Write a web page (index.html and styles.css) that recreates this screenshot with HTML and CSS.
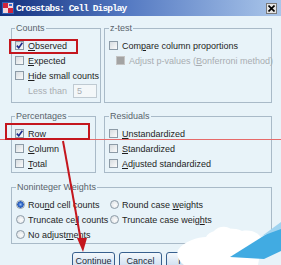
FILE: index.html
```html
<!DOCTYPE html>
<html lang="en">
<head>
    <meta charset="UTF-8">
    <title>Crosstabs: Cell Display</title>
    <link rel="stylesheet" href="styles.css">
</head>
<body>
<div class="window">
    <div class="titlebar">
        <svg class="app-icon" width="12" height="12" viewBox="0 0 12 12">
            <rect x="0" y="0" width="12" height="12" fill="#2c5fb4"/>
            <rect x="1" y="1" width="10" height="10" fill="#f2d6dc"/>
            <rect x="1" y="1" width="5" height="5" fill="#d0243c"/>
            <rect x="6" y="6" width="5" height="5" fill="#d0243c"/>
            <rect x="7" y="2" width="3" height="2" fill="#3a6ed0"/>
        </svg>
        <span class="title">Crosstabs: Cell Display</span>
        <span class="close">
            <svg width="7" height="7" viewBox="0 0 7 7"><path d="M0.5 0.5 L6.5 6.5 M6.5 0.5 L0.5 6.5" stroke="#000" stroke-width="1.6"/></svg>
        </span>
    </div>

    <div class="content">
        <div class="group-row top">
            <fieldset class="group counts">
                <legend>Counts</legend>
                <div class="opt"><span class="box checked"><svg width="7" height="7" viewBox="0 0 7 7"><path d="M0.8 3.6 L2.8 5.8 L6.4 0.8" fill="none" stroke="#1b2a8a" stroke-width="1.6"/></svg></span><span><u>O</u>bserved</span></div>
                <div class="opt"><span class="box"></span><span><u>E</u>xpected</span></div>
                <div class="opt"><span class="box"></span><span><u>H</u>ide small counts</span></div>
                <div class="opt sub muted">Less than <span class="num">5</span></div>
            </fieldset>
            <fieldset class="group wide">
                <legend>z-test</legend>
                <div class="opt"><span class="box"></span><span>Com<u>p</u>are column proportions</span></div>
                <div class="opt indent muted"><span class="box off"></span><span>Adjust p-values (<u>B</u>onferroni method)</span></div>
            </fieldset>
        </div>

        <div class="group-row mid">
            <fieldset class="group pct">
                <legend>Percentages</legend>
                <div class="opt"><span class="box checked"><svg width="7" height="7" viewBox="0 0 7 7"><path d="M0.8 3.6 L2.8 5.8 L6.4 0.8" fill="none" stroke="#1b2a8a" stroke-width="1.6"/></svg></span><span><u>R</u>ow</span></div>
                <div class="opt"><span class="box"></span><span><u>C</u>olumn</span></div>
                <div class="opt"><span class="box"></span><span><u>T</u>otal</span></div>
            </fieldset>
            <fieldset class="group wide">
                <legend>Residuals</legend>
                <div class="opt"><span class="box"></span><span><u>U</u>nstandardized</span></div>
                <div class="opt"><span class="box"></span><span><u>S</u>tandardized</span></div>
                <div class="opt"><span class="box"></span><span><u>A</u>djusted standardized</span></div>
            </fieldset>
        </div>

        <fieldset class="group weights">
            <legend>Noninteger Weights</legend>
            <div class="radios">
                <div class="opt"><span class="radio on"></span><span>Rou<u>n</u>d cell counts</span></div>
                <div class="opt"><span class="radio"></span><span>Round case <u>w</u>eights</span></div>
                <div class="opt"><span class="radio"></span><span>Truncate ce<u>l</u>l counts</span></div>
                <div class="opt"><span class="radio"></span><span>Truncate case weig<u>h</u>ts</span></div>
                <div class="opt"><span class="radio"></span><span>No adjust<u>m</u>ents</span></div>
            </div>
        </fieldset>

        <div class="buttons">
            <button>Continue</button>
            <button>Cancel</button>
            <button>Help</button>
        </div>
    </div>

    <svg class="marks" width="281" height="265" viewBox="0 0 281 265">
        <line x1="0" y1="139.5" x2="281" y2="139.5" stroke="#e66a6a" stroke-width="1"/>
        <rect x="10" y="40" width="67" height="13" fill="none" stroke="#c4161e" stroke-width="2"/>
        <rect x="6" y="124" width="83" height="15" fill="none" stroke="#c4161e" stroke-width="2"/>
        <line x1="63" y1="141" x2="81.5" y2="244" stroke="#c4161e" stroke-width="2"/>
        <polygon points="83,252 77,238 87,238" fill="#c4161e"/>
        <path fill="#ffffff" d="M178 250 C184 241 198 237 206 237 C210 229 232 226 242 231 C252 229 263 234 262 243 L258 265 L184 265 C179 261 176 256 178 250 Z"/>
        <path fill="#ffffff" d="M214 231 C218 226 228 225 231 230 Z"/>
        <path fill="#41abe2" d="M230 257 L281 225 L281 251 L264 259 Z"/>
        <path fill="#9fd3f0" d="M262 236 L281 222 L281 229 Z"/>
    </svg>
</div>
</body>
</html>
```

FILE: styles.css
```css
body { margin: 0; font-family: "Liberation Sans", Arial, sans-serif; }
.window { position: relative; width: 281px; height: 265px; overflow: hidden; background: #e8f3f9; color: #1e1e1e; font-size: 9px; }

.titlebar { height: 16px; display: flex; align-items: center; gap: 2px; padding: 0 4px 0 2px; background: linear-gradient(to right, #12307e, #5479c2 45%, #aac6ea); }
.app-icon { flex: none; }
.title { flex: 1; color: #fff; font-family: "Liberation Mono", monospace; font-weight: bold; font-size: 9.5px; letter-spacing: -0.9px; }
.close { width: 9px; height: 9px; display: flex; align-items: center; justify-content: center; background: #e4e4e4; border: 1px solid #7a7a7a; }

.content { padding: 6px 0 0 11px; }
.group-row { width: 261px; display: flex; justify-content: space-between; }
.group-row.mid { margin-top: 7px; }

.group { margin: 0; border: 1px solid #a9bac8; box-sizing: border-box; padding: 4px 3px 0; min-width: 0; }
.group legend { padding: 0 1px; font-size: 9px; line-height: 12px; color: #59636c; }
.counts { width: 90px; height: 81px; }
.wide { width: 168px; padding-left: 4px; padding-right: 4px; }
.top .wide { height: 81px; }
.pct { width: 85px; height: 63px; }
.mid .wide { height: 63px; }
.weights { width: 261px; height: 63px; margin-top: 8px; padding-left: 4px; }

.opt { display: flex; align-items: center; gap: 4px; height: 15px; white-space: nowrap; }
.opt.sub { padding-left: 13px; }
.opt.indent { padding-left: 7px; }
.muted { color: #a8adb2; }
.num { width: 22px; height: 12px; margin-left: 2px; padding-left: 3px; border: 1px solid #bfcad2; background: #f3f7f9; line-height: 12px; }

.box { width: 9px; height: 9px; flex: none; box-sizing: border-box; border: 1px solid #8d9ba7; background: linear-gradient(135deg, #d7dce0, #fbfbfb); display: flex; align-items: center; justify-content: center; }
.box.off { background: #a3a3a3; border-color: #c4c4c4; }

.radios { display: grid; grid-template-columns: 94px auto; }
.radios .opt { gap: 3px; }
.radio { width: 9px; height: 9px; flex: none; box-sizing: border-box; border-radius: 50%; border: 1px solid #8d9ba7; background: radial-gradient(circle at 60% 60%, #fdfdfd, #d6dbe0); }
.radio.on { background: radial-gradient(circle, #9cc2f0 0, #2f66c8 2px, #2a5cb8 3px, #e6ecf2 3.5px); }

.buttons { display: flex; justify-content: center; gap: 4px; margin-top: 8px; margin-left: -11px; }
.buttons button { width: 43px; height: 18px; padding: 0; font-family: inherit; font-size: 9px; color: #1e2a3a; border: 1px solid #38608e; border-radius: 3px; background: linear-gradient(#f4f8fc, #c9dbee); }

.marks { position: absolute; left: 0; top: 0; pointer-events: none; }
```
